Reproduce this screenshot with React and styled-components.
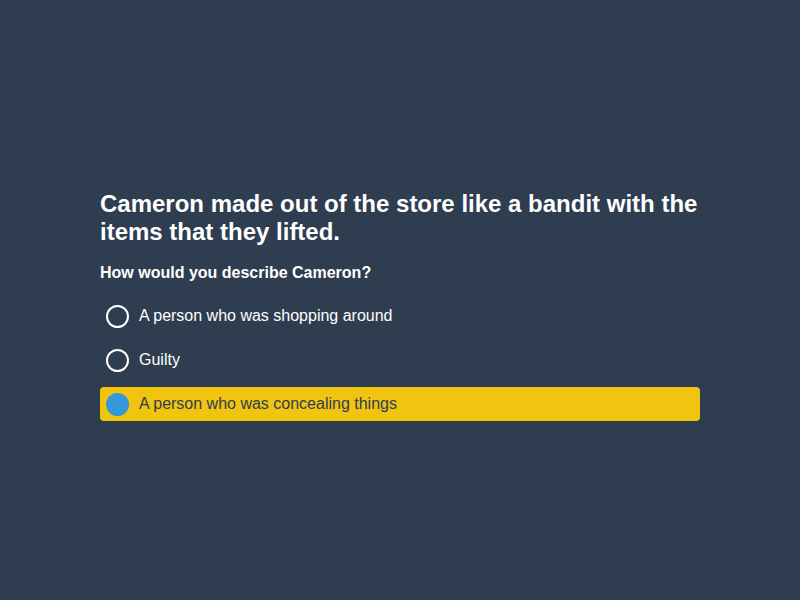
import React, { useState } from 'react';
import styled, { createGlobalStyle } from 'styled-components';

const GlobalStyle = createGlobalStyle`
    html, body {
        margin: 0;
        padding: 0;
        height: 100%;
        background: #2e3d4f;
    }
    #root {
        height: 100%;
    }
`;

const Page = styled('div')`
    align-items: center;
    box-sizing: border-box;
    display: flex;
    font-family: 'Liberation Sans', Arial, sans-serif;
    height: 100vh;
    justify-content: center;
    width: 100%;
`;

const Quiz = styled('div')`
    padding-top: 11px;
    width: 600px;
`;

const Title = styled('h1')`
    color: #fff;
    font-size: 24px;
    font-weight: bold;
    line-height: 28px;
    margin: 0 0 17px;
`;

const Question = styled('p')`
    color: #fff;
    font-size: 16px;
    font-weight: bold;
    line-height: 20px;
    margin: 0 0 16px;
`;

const Options = styled('div')`
    display: flex;
    flex-direction: column;
    gap: 10px;
`;

const Option = styled('label')`
    align-items: center;
    background: ${(p) => (p.$selected ? '#f1c40f' : 'transparent')};
    border-radius: 4px;
    color: ${(p) => (p.$selected ? '#2c3e50' : '#fff')};
    cursor: pointer;
    display: flex;
    font-size: 16px;
    gap: 10px;
    height: 34px;
    padding: 0 6px;
`;

const Radio = styled('span')`
    background: ${(p) => (p.$selected ? '#3498db' : 'transparent')};
    border: 2px solid ${(p) => (p.$selected ? '#3498db' : '#fff')};
    border-radius: 50%;
    box-sizing: border-box;
    flex: none;
    height: 23px;
    width: 23px;
`;

const answers = [
    'A person who was shopping around',
    'Guilty',
    'A person who was concealing things',
];

const App = () => {
    const [selected, setSelected] = useState(2);

    return (
        <Page>
            <GlobalStyle />
            <Quiz>
                <Title>
                    Cameron made out of the store like a bandit with the items
                    that they lifted.
                </Title>
                <Question>How would you describe Cameron?</Question>
                <Options>
                    {answers.map((answer, i) => (
                        <Option
                            key={answer}
                            $selected={selected === i}
                            onClick={() => setSelected(i)}
                        >
                            <Radio $selected={selected === i} />
                            {answer}
                        </Option>
                    ))}
                </Options>
            </Quiz>
        </Page>
    );
};

export default App;
